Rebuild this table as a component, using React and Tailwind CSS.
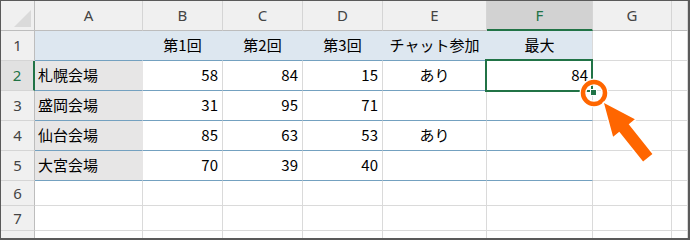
const COLS = ["A", "B", "C", "D", "E", "F", "G", ""];

const ROWS = [
  ["", "第1回", "第2回", "第3回", "チャット参加", "最大"],
  ["札幌会場", "58", "84", "15", "あり", "84"],
  ["盛岡会場", "31", "95", "71", "", ""],
  ["仙台会場", "85", "63", "53", "あり", ""],
  ["大宮会場", "70", "39", "40", "", ""],
];

function cellClass(r, c) {
  // r: 1-based sheet row, c: 0-based column index (A = 0)
  const base = "border-r border-b flex items-center px-[4px] overflow-hidden whitespace-nowrap";
  if (c >= 6 || r > 5) return `${base} bg-white border-[#dadada]`;
  if (r === 1) {
    return c === 5
      ? `${base} justify-center bg-[#dde7f0] border-r-[#dadada] border-b-[#74a1c0]`
      : `${base} justify-center bg-[#dde7f0] border-r-[#dde7f0] border-b-[#74a1c0]`;
  }
  if (c === 0) return `${base} pl-[3px] bg-[#e7e6e6] border-r-[#e7e6e6] border-b-[#74a1c0]`;
  if (c === 4) return `${base} justify-center bg-white border-r-[#dadada] border-b-[#74a1c0]`;
  return `${base} justify-end bg-white border-r-[#dadada] border-b-[#74a1c0]`;
}

export default function App() {
  const sheetRows = [1, 2, 3, 4, 5, 6, 7, 8];

  return (
    <div className="relative w-[690px] h-[240px] overflow-hidden bg-white border-t border-l border-r-2 border-b-2 border-[#5a5a5a]">
      <div className="grid grid-cols-[34px_108px_80px_80px_80px_104px_106px_79px_1fr] grid-rows-[30px_30px_30px_30px_30px_30px_25px_25px_30px] text-[15px] text-black font-['Noto_Sans_CJK_JP',sans-serif]">
        {/* corner */}
        <div className="relative bg-[#f0f0f0] border-r border-b border-[#bdbdbd]">
          <div className="absolute right-[3px] bottom-[3px] w-0 h-0 border-l-[17px] border-l-transparent border-b-[17px] border-b-[#dadada]" />
        </div>

        {/* column headers */}
        {COLS.map((col) =>
          col === "F" ? (
            <div
              key={col}
              className="flex items-center justify-center bg-[#d2d2d2] border-r border-r-[#d5d5d5] border-b-2 border-b-[#217346] text-[#217346] font-['Noto_Sans',sans-serif]"
            >
              {col}
            </div>
          ) : (
            <div
              key={col || "H"}
              className="flex items-center justify-center bg-[#f0f0f0] border-r border-r-[#d5d5d5] border-b border-b-[#bdbdbd] text-[#444] font-['Noto_Sans',sans-serif]"
            >
              {col}
            </div>
          )
        )}

        {sheetRows.map((r) => {
          const data = ROWS[r - 1] || [];
          return [
            <div
              key={`h${r}`}
              className={
                r === 2
                  ? "flex items-center justify-center bg-[#e1e1e1] border-r-2 border-r-[#217346] border-b border-b-[#d5d5d5] text-[#217346] font-['Noto_Sans',sans-serif]"
                  : "flex items-center justify-center bg-[#f0f0f0] border-r border-r-[#bdbdbd] border-b border-b-[#d5d5d5] text-[#444] font-['Noto_Sans',sans-serif]"
              }
            >
              {r}
            </div>,
            ...COLS.map((_, c) => (
              <div key={`${r}-${c}`} className={cellClass(r, c)}>
                {data[c] || ""}
              </div>
            )),
          ];
        })}
      </div>

      {/* selection box on F2 */}
      <div className="absolute left-[484px] top-[58px] w-[108px] h-[33px] border-2 border-[#217346] pointer-events-none" />

      {/* fill handle highlight + arrow */}
      <svg className="absolute left-0 top-0 pointer-events-none" width="690" height="240" viewBox="-1 -1 690 240">
        <circle cx="592" cy="91" r="11" fill="none" stroke="#ffffff" strokeWidth="7" />
        <circle cx="592" cy="91" r="11" fill="none" stroke="#ff6600" strokeWidth="4.5" />
        <rect x="588.5" y="87.5" width="6" height="6" fill="#217346" stroke="#ffffff" strokeWidth="1" />
        <polygon
          points="602,101 632.9,117.25 626.7,122.25 650.4,152 641.1,159.5 617.3,129.75 611.1,134.75"
          fill="#ff6600"
          stroke="#ffffff"
          strokeWidth="3"
          strokeLinejoin="round"
          paintOrder="stroke"
        />
      </svg>
    </div>
  );
}
